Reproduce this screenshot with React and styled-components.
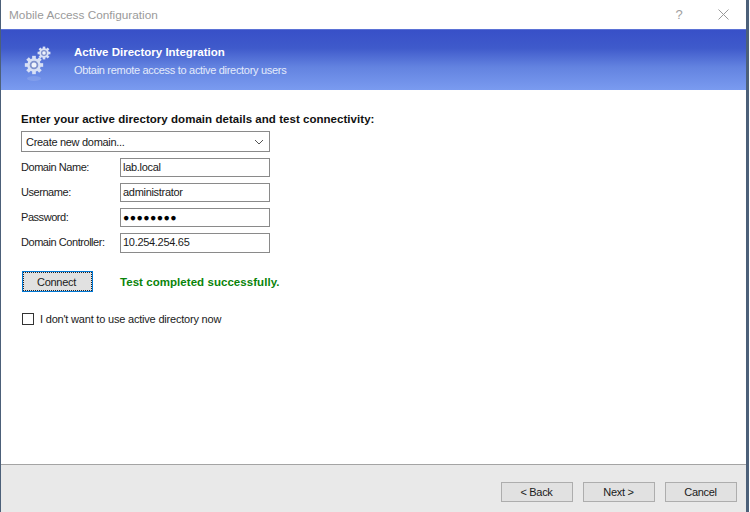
import React from 'react'
import styled, { createGlobalStyle } from 'styled-components'

const Global = createGlobalStyle`
  html, body { margin: 0; padding: 0; background: #fff; }
  body { font-family: "Liberation Sans", Arial, sans-serif; font-size: 11px; letter-spacing: -0.3px; color: #1a1a1a; }
`

const Frame = styled.div`
  width: 750px;
  height: 512px;
  box-sizing: border-box;
  padding-right: 1px;
  background: #fff;
`

const Dialog = styled.div`
  height: 100%;
  box-sizing: border-box;
  display: flex;
  flex-direction: column;
  border-left: 1px solid #4c6079;
  border-right: 3px solid #4c6079;
`

const TitleBar = styled.div`
  height: 29px;
  flex: none;
  display: flex;
  align-items: center;
  padding-left: 8px;
  color: #9a9a9a;
  font-size: 11.8px;
  letter-spacing: 0;
`

const TitleText = styled.span`
  flex: 1;
`

const TitleButton = styled.div`
  width: ${({ $width }) => $width}px;
  display: flex;
  justify-content: center;
  align-items: center;
  color: #a0a0a0;
  font-size: 13px;
`

const Banner = styled.div`
  height: 61px;
  flex: none;
  box-sizing: border-box;
  display: flex;
  align-items: center;
  padding-left: 21px;
  border-top: 1px solid #5b72d6;
  background: linear-gradient(#3850c8 0%, #3f5acb 30%, #6383e0 62%, #7a9bf0 100%);
  color: #fff;
`

const BannerText = styled.div`
  margin-left: 20px;
  display: flex;
  flex-direction: column;
  gap: 4px;
  margin-top: 1px;
`

const BannerTitle = styled.div`
  font-weight: bold;
  font-size: 11.5px;
  letter-spacing: 0;
  line-height: 14px;
`

const BannerSub = styled.div`
  line-height: 14px;
  letter-spacing: -0.3px;
  color: #e4ebfb;
`

const Body = styled.div`
  flex: 1;
  padding: 22px 0 0 20px;
`

const Heading = styled.div`
  font-weight: bold;
  font-size: 11.5px;
  line-height: 14px;
  letter-spacing: 0.04px;
  color: #111;
`

const Combo = styled.div`
  width: 249px;
  height: 21px;
  box-sizing: border-box;
  margin-top: 5px;
  padding: 0 5px 0 4px;
  display: flex;
  align-items: center;
  justify-content: space-between;
  border: 1px solid #8a8a8a;
`

const Fields = styled.div`
  display: grid;
  grid-template-columns: 99px 150px;
  grid-template-rows: 19px 19px 19px 20px;
  row-gap: 6px;
  margin-top: 6px;
  align-items: center;
`

const Label = styled.label`
  padding-bottom: 2px;
  color: #222;
  letter-spacing: -0.45px;
`

const Field = styled.div`
  height: ${({ $tall }) => ($tall ? 20 : 19)}px;
  box-sizing: border-box;
  padding: 0 0 2px 2px;
  display: flex;
  align-items: center;
  border: 1px solid #8a8a8a;
`

const Dots = styled.span`
  font-size: 10.5px;
  letter-spacing: 0.4px;
  color: #000;
`

const TestRow = styled.div`
  display: flex;
  align-items: center;
  margin-top: 18px;
  margin-left: 1px;
`

const FocusButton = styled.div`
  width: 71px;
  height: 21px;
  box-sizing: border-box;
  padding-right: 2px;
  display: flex;
  align-items: center;
  justify-content: center;
  background: #e1e1e1;
  border: 1px solid #0078d7;
  outline: 1px dotted #222;
  outline-offset: -2px;
`

const Status = styled.div`
  margin-left: 27px;
  font-weight: bold;
  font-size: 11.5px;
  letter-spacing: 0.05px;
  color: #0a840a;
`

const CheckRow = styled.div`
  display: flex;
  align-items: center;
  margin-top: 21px;
  margin-left: 1px;
`

const Box = styled.div`
  width: 12px;
  height: 12px;
  box-sizing: border-box;
  border: 1px solid #333;
  background: #fff;
`

const CheckLabel = styled.span`
  margin-left: 6px;
  letter-spacing: -0.2px;
`

const Footer = styled.div`
  height: 48px;
  flex: none;
  box-sizing: border-box;
  display: flex;
  justify-content: flex-end;
  gap: 10px;
  padding: 17px 9px 0 0;
  background: #e9e9e9;
  border-top: 1px solid #a4a4a4;
`

const NavButton = styled.div`
  width: 72px;
  height: 20px;
  box-sizing: border-box;
  padding-right: 1px;
  display: flex;
  align-items: center;
  justify-content: center;
  background: #e1e1e1;
  border: 1px solid #adadad;
`

const Gear = ({ size }) => {
  const teeth = Array.from({ length: 8 }, (_, i) => i * 45)
  return (
    <svg width={size} height={size} viewBox="0 0 24 24" style={{ display: 'block' }}>
      {teeth.map(a => (
        <rect key={a} x="9.8" y="1" width="4.4" height="6" fill="#d8e0f5" transform={`rotate(${a} 12 12)`} />
      ))}
      <circle cx="12" cy="12" r="8.2" fill="#d8e0f5" />
      <circle cx="12" cy="12" r="5.2" fill="#7f91cc" />
      <circle cx="12" cy="12" r="3" fill="#f0f3fb" />
    </svg>
  )
}

const GearStack = styled.div`
  width: 32px;
  height: 41px;
  position: relative;
  flex: none;
`

const BigGear = styled.div`
  position: absolute;
  left: 2px;
  top: 15px;
`

const SmallGear = styled.div`
  position: absolute;
  left: 15px;
  top: 6px;
`

const GearShadow = styled.div`
  position: absolute;
  left: 5px;
  top: 36px;
  width: 14px;
  height: 5px;
  border-radius: 50%;
  background: rgba(255, 255, 255, 0.12);
`

const Chevron = () => (
  <svg width="10" height="6" viewBox="0 0 10 6">
    <path d="M1 1 L5 5 L9 1" fill="none" stroke="#555" strokeWidth="1" />
  </svg>
)

const CloseIcon = () => (
  <svg width="11" height="11" viewBox="0 0 11 11" style={{ display: 'block' }}>
    <path d="M0.5 0.5 L10.5 10.5 M10.5 0.5 L0.5 10.5" stroke="#999" strokeWidth="1" />
  </svg>
)

const App = () => {
  return (
    <Frame>
      <Global />
      <Dialog>
        <TitleBar>
          <TitleText>Mobile Access Configuration</TitleText>
          <TitleButton $width={42}>?</TitleButton>
          <TitleButton $width={46}><CloseIcon /></TitleButton>
        </TitleBar>
        <Banner>
          <GearStack>
            <BigGear><Gear size={20} /></BigGear>
            <SmallGear><Gear size={14} /></SmallGear>
            <GearShadow />
          </GearStack>
          <BannerText>
            <BannerTitle>Active Directory Integration</BannerTitle>
            <BannerSub>Obtain remote access to active directory users</BannerSub>
          </BannerText>
        </Banner>
        <Body>
          <Heading>Enter your active directory domain details and test connectivity:</Heading>
          <Combo>
            <span>Create new domain...</span>
            <Chevron />
          </Combo>
          <Fields>
            <Label>Domain Name:</Label>
            <Field>lab.local</Field>
            <Label>Username:</Label>
            <Field>administrator</Field>
            <Label>Password:</Label>
            <Field><Dots>●●●●●●●●</Dots></Field>
            <Label>Domain Controller:</Label>
            <Field $tall>10.254.254.65</Field>
          </Fields>
          <TestRow>
            <FocusButton>Connect</FocusButton>
            <Status>Test completed successfully.</Status>
          </TestRow>
          <CheckRow>
            <Box />
            <CheckLabel>I don't want to use active directory now</CheckLabel>
          </CheckRow>
        </Body>
        <Footer>
          <NavButton>&lt; Back</NavButton>
          <NavButton>Next &gt;</NavButton>
          <NavButton>Cancel</NavButton>
        </Footer>
      </Dialog>
    </Frame>
  )
}

export default App
